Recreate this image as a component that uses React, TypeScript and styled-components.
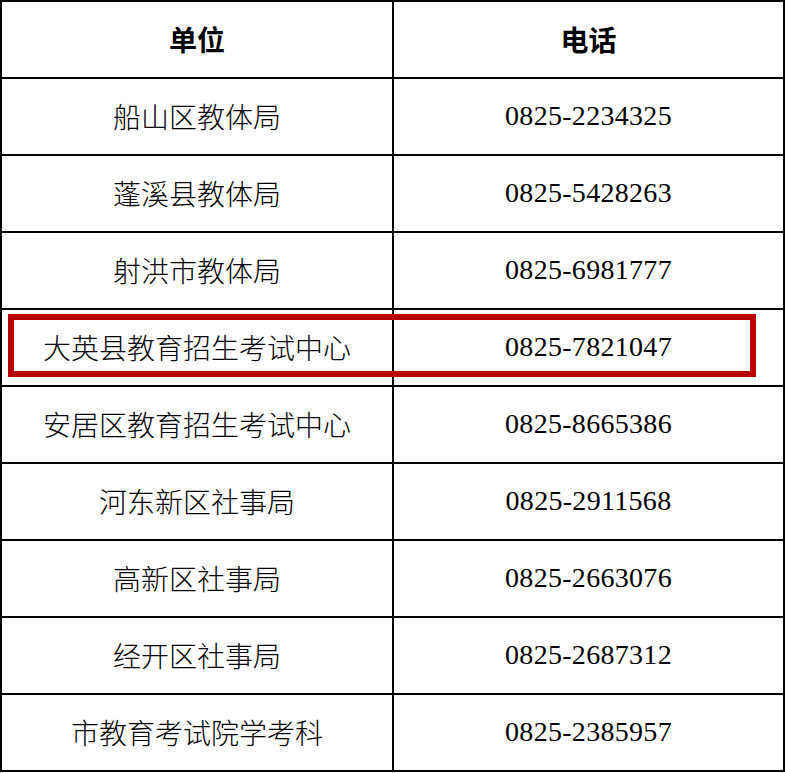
import React from 'react';
import styled, { createGlobalStyle } from 'styled-components';

const GlobalStyle = createGlobalStyle`
  html, body {
    margin: 0;
    padding: 0;
    background: #ffffff;
  }
`;

const Table = styled.div`
  display: flex;
  flex-direction: column;
  gap: 2px;
  width: 781px;
  padding: 2px;
  background: #000000;
`;

const Row = styled.div`
  display: grid;
  grid-template-columns: 390px 389px;
  gap: 2px;
  height: 75px;
  position: relative;
`;

const Cell = styled.div<{ $head?: boolean; $num?: boolean }>`
  display: flex;
  align-items: center;
  justify-content: center;
  background: #ffffff;
  color: #000000;
  font-size: 28px;
  font-weight: ${(p) => (p.$head ? 700 : 300)};
  font-family: ${(p) =>
    p.$num
      ? '"Liberation Serif", "Noto Sans CJK SC", serif'
      : '"Noto Sans CJK SC", sans-serif'};
  letter-spacing: ${(p) => (p.$num ? '0.3px' : '0')};
  padding-bottom: 2px;
`;

const Highlight = styled.div`
  position: absolute;
  left: 6px;
  top: 4px;
  width: 736px;
  height: 51px;
  border: 6px solid #b80000;
  pointer-events: none;
`;

const rows = [
  { unit: '船山区教体局', phone: '0825-2234325' },
  { unit: '蓬溪县教体局', phone: '0825-5428263' },
  { unit: '射洪市教体局', phone: '0825-6981777' },
  { unit: '大英县教育招生考试中心', phone: '0825-7821047', mark: true },
  { unit: '安居区教育招生考试中心', phone: '0825-8665386' },
  { unit: '河东新区社事局', phone: '0825-2911568' },
  { unit: '高新区社事局', phone: '0825-2663076' },
  { unit: '经开区社事局', phone: '0825-2687312' },
  { unit: '市教育考试院学考科', phone: '0825-2385957' },
];

export default function App() {
  return (
    <>
      <GlobalStyle />
      <Table>
        <Row>
          <Cell $head>单位</Cell>
          <Cell $head>电话</Cell>
        </Row>
        {rows.map((r) => (
          <Row key={r.phone}>
            <Cell>{r.unit}</Cell>
            <Cell $num>{r.phone}</Cell>
            {r.mark && <Highlight />}
          </Row>
        ))}
      </Table>
    </>
  );
}
